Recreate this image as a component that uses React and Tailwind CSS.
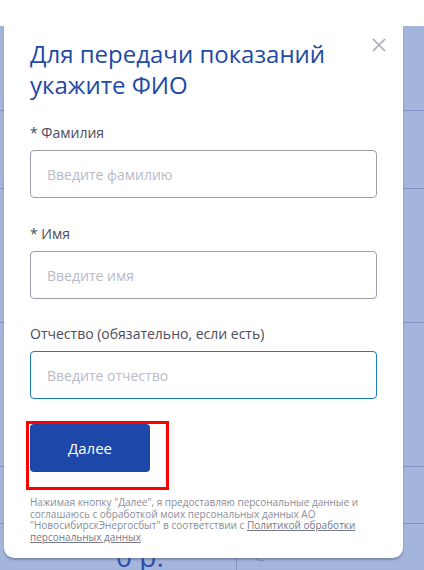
export default function App() {
  return (
    <div className="relative w-[424px] h-[570px] overflow-hidden bg-white font-['Open_Sans',sans-serif]">
      <div className="h-[26px] bg-white" />
      <div className="flex h-[544px] flex-col bg-[#a4b5dc]">
        <div className="h-[87px] border-b border-[#8193c7]" />
        <div className="h-[80px] border-b border-[#8193c7]" />
        <div className="h-[137px] border-b border-[#8193c7]" />
        <div className="h-[148px] border-b border-[#8193c7]" />
        <div className="h-[58px] border-b border-[#8193c7]" />
        <div className="flex flex-1">
          <div className="w-[237px] border-r border-[#8193c7] pl-[116px] pt-[18px] text-[28px] leading-none text-[#2a50aa]">
            0 р.
          </div>
          <div className="pl-[17px] pt-[22px] text-[16px] leading-none text-[#8a93b8]">@</div>
        </div>
      </div>

      <div className="absolute left-[4px] top-[26px] flex h-[532px] w-[399px] flex-col rounded-b-[10px] bg-white px-[26px] pt-[12px] shadow-[0_2px_2px_rgba(60,70,100,0.4)]">
        <button className="absolute right-[17px] top-[12px] h-[14px] w-[14px]" aria-label="Закрыть">
          <svg width="14" height="14" viewBox="0 0 14 14" fill="none">
            <path d="M1 1L13 13M13 1L1 13" stroke="#a6a9b6" strokeWidth="1.6" />
          </svg>
        </button>
        <h2 className="pr-[20px] text-[24px] font-normal leading-[31px] text-[#1f4aa6]">
          Для передачи показаний укажите ФИО
        </h2>

        <label className="mt-[23px] mb-[7px] block text-[14px] leading-[20px] text-[#4b4d5a]">* Фамилия</label>
        <input
          className="h-[48px] w-full rounded-[4px] border border-[#9c9eb0] px-[16px] text-[14px] outline-none placeholder:text-[#b8bbc8]"
          placeholder="Введите фамилию"
        />

        <label className="mt-[26px] mb-[7px] block text-[14px] leading-[20px] text-[#4b4d5a]">* Имя</label>
        <input
          className="h-[48px] w-full rounded-[4px] border border-[#9c9eb0] px-[16px] text-[14px] outline-none placeholder:text-[#b8bbc8]"
          placeholder="Введите имя"
        />

        <label className="mt-[25px] mb-[7px] block text-[14px] leading-[20px] text-[#4b4d5a]">
          Отчество (обязательно, если есть)
        </label>
        <input
          className="h-[48px] w-full rounded-[4px] border border-[#1b7bc0] px-[16px] text-[14px] outline-none placeholder:text-[#b8bbc8]"
          placeholder="Введите отчество"
        />

        <div className="relative mt-[25px]">
          <button className="h-[48px] w-[120px] rounded-[4px] bg-[#1d47a8] text-[15px] text-white">Далее</button>
          <div className="pointer-events-none absolute left-[-4px] top-[-3px] h-[69px] w-[143px] border-[3px] border-[#ff0000]" />
        </div>

        <p className="mt-[25px] text-[10px] leading-[11.5px] text-[#8a8d9a]">
          Нажимая кнопку "Далее", я предоставляю персональные данные и
          <br />
          соглашаюсь с обработкой моих персональных данных АО
          <br />
          "НовосибирскЭнергосбыт" в соответствии с{" "}
          <a className="text-[#767988] underline">
            Политикой обработки
            <br />
            персональных данных
          </a>
        </p>
      </div>
    </div>
  );
}
